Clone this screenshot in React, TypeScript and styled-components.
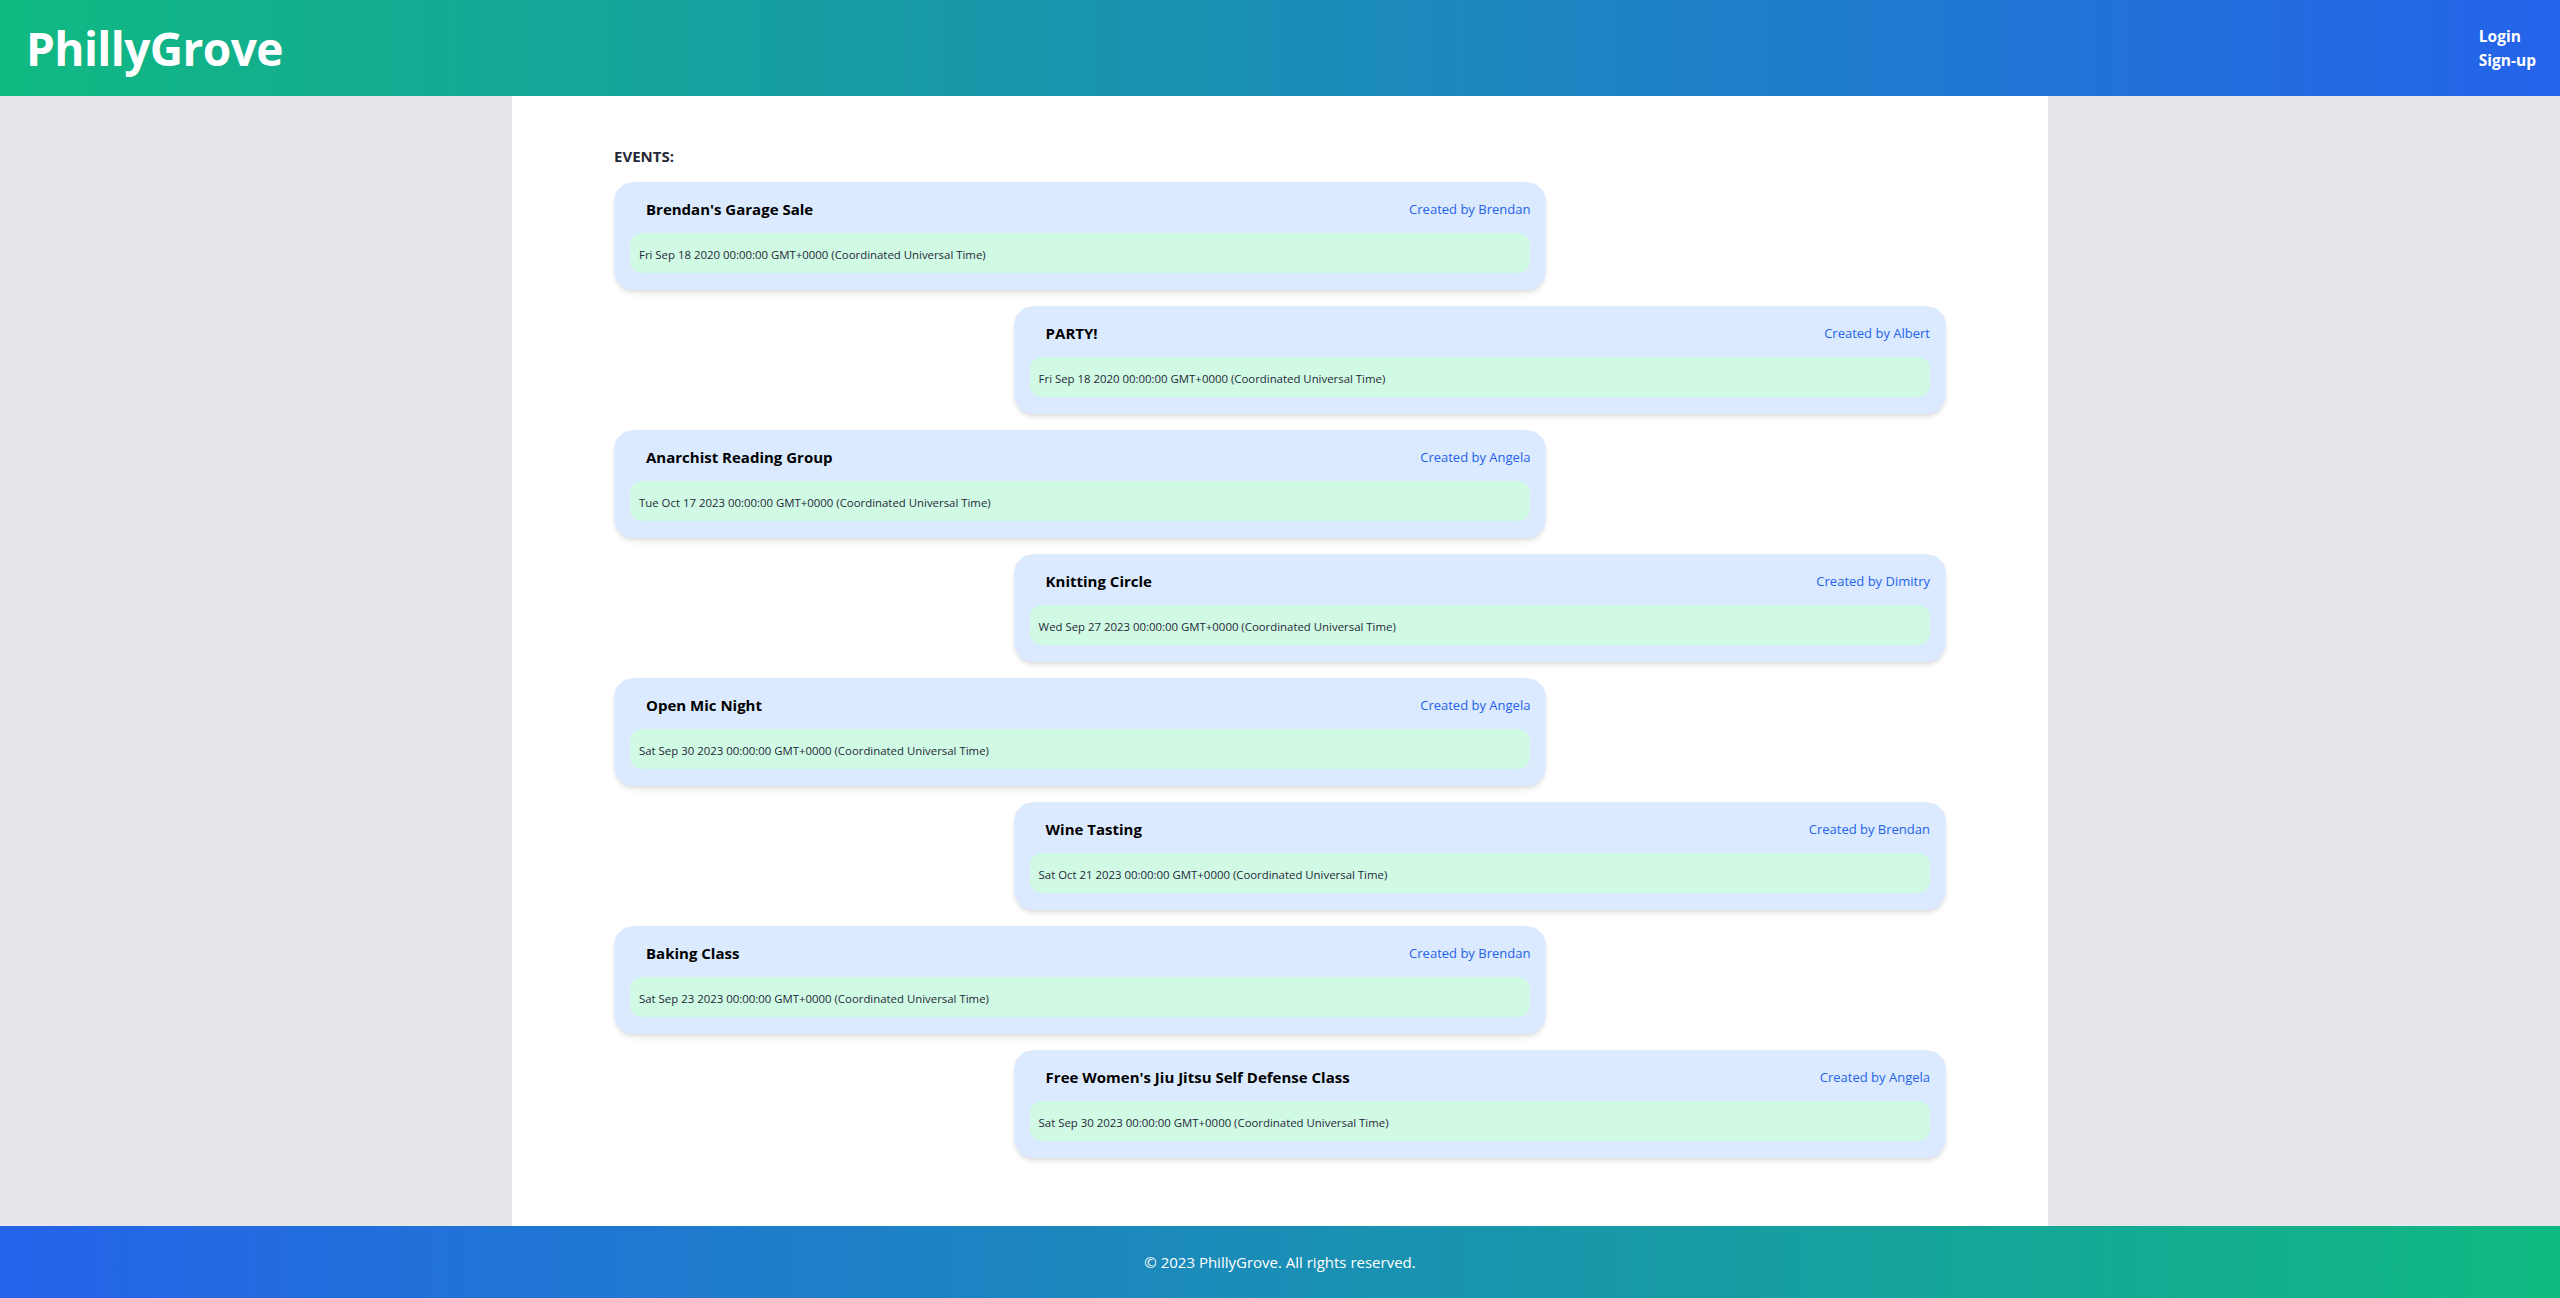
import React from "react";
import styled, { createGlobalStyle } from "styled-components";

const GlobalStyle = createGlobalStyle`
  * { box-sizing: border-box; }
  html, body { margin: 0; padding: 0; }
  body {
    font-family: "Open Sans", "Noto Sans", sans-serif;
    background: #e5e7eb;
  }
`;

const Page = styled.div`
  display: flex;
  flex-direction: column;
  min-height: 100vh;
`;

const Header = styled.header`
  height: 96px;
  display: flex;
  align-items: center;
  justify-content: space-between;
  padding: 0 24px 0 26px;
  background: linear-gradient(to right, #10b981, #2563eb);
`;

const Logo = styled.h1`
  margin: 0;
  color: #ffffff;
  font-size: 46px;
  font-weight: 700;
  letter-spacing: -0.6px;
`;

const NavLinks = styled.nav`
  display: flex;
  flex-direction: column;
  align-items: flex-start;
`;

const NavLink = styled.a`
  color: #ffffff;
  font-size: 15.5px;
  font-weight: 700;
  line-height: 24px;
  text-decoration: none;
`;

const Body = styled.div`
  flex: 1;
  display: flex;
  justify-content: center;
`;

const Main = styled.main`
  width: 1536px;
  background: #ffffff;
  padding: 49px 102px 67px;
`;

const SectionTitle = styled.h2`
  margin: 0 0 15px;
  font-size: 15px;
  font-weight: 700;
  line-height: 22px;
  color: #1f2937;
`;

const List = styled.div`
  display: flex;
  flex-direction: column;
  gap: 16px;
`;

const Card = styled.div<{ $right: boolean }>`
  width: 70%;
  align-self: ${(p) => (p.$right ? "flex-end" : "flex-start")};
  background: #dbeafe;
  border-radius: 20px;
  padding: 16px;
  box-shadow: 0 4px 6px -1px rgba(0, 0, 0, 0.1), 0 2px 4px -2px rgba(0, 0, 0, 0.1);
`;

const CardHead = styled.div`
  display: flex;
  justify-content: space-between;
  align-items: center;
  height: 24px;
  margin-bottom: 12px;
  margin-top: -1px;
`;

const EventName = styled.span`
  padding-left: 16px;
  font-size: 15px;
  font-weight: 700;
  color: #000000;
`;

const Creator = styled.span`
  font-size: 13px;
  color: #2563eb;
`;

const DateBox = styled.div`
  height: 40px;
  display: flex;
  align-items: center;
  padding: 2px 9px 0;
  margin-bottom: 1px;
  border-radius: 12px;
  background: #d1fae5;
  font-size: 11.4px;
  color: #1f2937;
`;

const Footer = styled.footer`
  height: 72px;
  display: flex;
  align-items: center;
  justify-content: center;
  background: linear-gradient(to right, #2563eb, #10b981);
  color: #ffffff;
  font-size: 15px;
`;

const events = [
  { name: "Brendan's Garage Sale", by: "Brendan", date: "Fri Sep 18 2020 00:00:00 GMT+0000 (Coordinated Universal Time)" },
  { name: "PARTY!", by: "Albert", date: "Fri Sep 18 2020 00:00:00 GMT+0000 (Coordinated Universal Time)" },
  { name: "Anarchist Reading Group", by: "Angela", date: "Tue Oct 17 2023 00:00:00 GMT+0000 (Coordinated Universal Time)" },
  { name: "Knitting Circle", by: "Dimitry", date: "Wed Sep 27 2023 00:00:00 GMT+0000 (Coordinated Universal Time)" },
  { name: "Open Mic Night", by: "Angela", date: "Sat Sep 30 2023 00:00:00 GMT+0000 (Coordinated Universal Time)" },
  { name: "Wine Tasting", by: "Brendan", date: "Sat Oct 21 2023 00:00:00 GMT+0000 (Coordinated Universal Time)" },
  { name: "Baking Class", by: "Brendan", date: "Sat Sep 23 2023 00:00:00 GMT+0000 (Coordinated Universal Time)" },
  { name: "Free Women's Jiu Jitsu Self Defense Class", by: "Angela", date: "Sat Sep 30 2023 00:00:00 GMT+0000 (Coordinated Universal Time)" },
];

export default function App() {
  return (
    <>
      <GlobalStyle />
      <Page>
        <Header>
          <Logo>PhillyGrove</Logo>
          <NavLinks>
            <NavLink href="#">Login</NavLink>
            <NavLink href="#">Sign-up</NavLink>
          </NavLinks>
        </Header>
        <Body>
          <Main>
            <SectionTitle>EVENTS:</SectionTitle>
            <List>
              {events.map((e, i) => (
                <Card key={i} $right={i % 2 === 1}>
                  <CardHead>
                    <EventName>{e.name}</EventName>
                    <Creator>Created by {e.by}</Creator>
                  </CardHead>
                  <DateBox>{e.date}</DateBox>
                </Card>
              ))}
            </List>
          </Main>
        </Body>
        <Footer>© 2023 PhillyGrove. All rights reserved.</Footer>
      </Page>
    </>
  );
}
